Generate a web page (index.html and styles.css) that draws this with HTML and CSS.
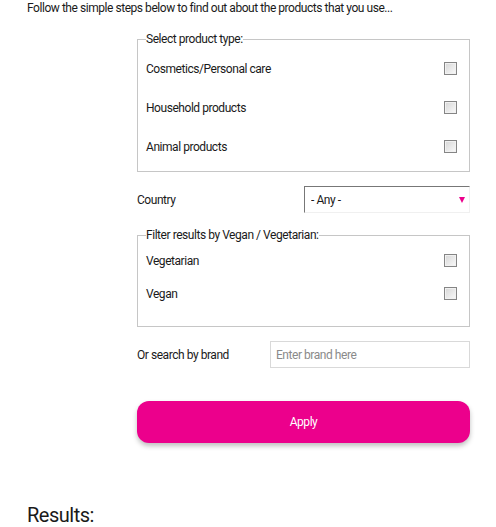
FILE: index.html
```html
<!DOCTYPE html>
<html lang="en">
<head>
    <meta charset="UTF-8">
    <meta name="viewport" content="width=device-width, initial-scale=1.0">
    <title>Product Finder</title>
    <link rel="stylesheet" href="styles.css">
</head>
<body>

<div class="page">
    <p class="intro">Follow the simple steps below to find out about the products that you use...</p>

    <form class="filters" onsubmit="return false">
        <fieldset class="group group-type">
            <legend>Select product type:</legend>
            <label class="check-row">Cosmetics/Personal care <input type="checkbox" name="type" value="cosmetics"></label>
            <label class="check-row">Household products <input type="checkbox" name="type" value="household"></label>
            <label class="check-row">Animal products <input type="checkbox" name="type" value="animal"></label>
        </fieldset>

        <div class="field-row country-row">
            <label for="country">Country</label>
            <div class="select-wrap">
                <select id="country">
                    <option>- Any -</option>
                </select>
            </div>
        </div>

        <fieldset class="group group-diet">
            <legend>Filter results by Vegan / Vegetarian:</legend>
            <label class="check-row">Vegetarian <input type="checkbox" name="diet" value="vegetarian"></label>
            <label class="check-row">Vegan <input type="checkbox" name="diet" value="vegan"></label>
        </fieldset>

        <div class="field-row brand-row">
            <label for="brand">Or search by brand</label>
            <input type="text" id="brand" placeholder="Enter brand here">
        </div>

        <button type="submit" class="apply">Apply</button>
    </form>

    <h2 class="results">Results:</h2>
</div>

</body>
</html>
```

FILE: styles.css
```css
body {
    font-family: Roboto, "Liberation Sans", sans-serif;
    font-size: 12px;
    letter-spacing: -0.45px;
    color: #1a1a1a;
    background: #fff;
    margin: 0;
    padding: 0;
}
.page {
    padding: 0 26px 0 27px;
}
.intro {
    margin: 0;
    line-height: 16px;
}
.filters {
    margin: 16px 0 0 110px;
    width: 333px;
}
.group {
    margin: 0;
    border: 1px solid #c6c6c6;
    padding: 3px 12px 0 8px;
}
.group legend {
    padding: 0;
    line-height: 14px;
}
.check-row {
    display: flex;
    justify-content: space-between;
    align-items: center;
    height: 39px;
}
.group-type {
    padding-bottom: 5px;
}
.group-diet {
    margin-top: 15px;
    padding-top: 2px;
    padding-bottom: 16px;
}
.group-diet .check-row {
    height: 33px;
}
input[type="checkbox"] {
    -webkit-appearance: none;
    appearance: none;
    width: 13px;
    height: 13px;
    margin: 0;
    border: 1px solid #858585;
    box-shadow: inset 0 0 0 1px #f1f1f1;
    background: linear-gradient(135deg, #d6d6d6, #fafafa);
}
.field-row {
    display: flex;
    justify-content: space-between;
    align-items: center;
}
.country-row {
    margin-top: 14px;
}
.select-wrap {
    position: relative;
    width: 166px;
}
.select-wrap select {
    -webkit-appearance: none;
    appearance: none;
    width: 100%;
    height: 27px;
    margin: 0;
    padding: 0 0 0 6px;
    font: inherit;
    letter-spacing: inherit;
    color: #1a1a1a;
    background: #fff;
    border: 1px solid #f0f0f0;
    border-top-color: #777;
    border-left-color: #777;
    border-radius: 0;
}
.select-wrap::after {
    content: "";
    position: absolute;
    right: 5px;
    top: 11px;
    border-left: 3.5px solid transparent;
    border-right: 3.5px solid transparent;
    border-top: 6px solid #ec008c;
    pointer-events: none;
}
.brand-row {
    margin-top: 14px;
}
.brand-row input {
    box-sizing: border-box;
    width: 200px;
    height: 27px;
    margin: 0;
    padding: 0 5px;
    font: inherit;
    letter-spacing: inherit;
    border: 1px solid #d9d9d9;
}
.brand-row input::placeholder {
    color: #8a8a8a;
}
.apply {
    display: block;
    width: 100%;
    height: 42px;
    margin-top: 33px;
    border: none;
    border-radius: 12px;
    background-color: #ec008c;
    color: #fff;
    font: inherit;
    letter-spacing: inherit;
    box-shadow: 0 3px 5px rgba(0, 0, 0, 0.25);
    cursor: pointer;
}
.results {
    margin: 60px 0 0;
    font-size: 20px;
    font-weight: normal;
    letter-spacing: -0.5px;
    line-height: 24px;
}
```
